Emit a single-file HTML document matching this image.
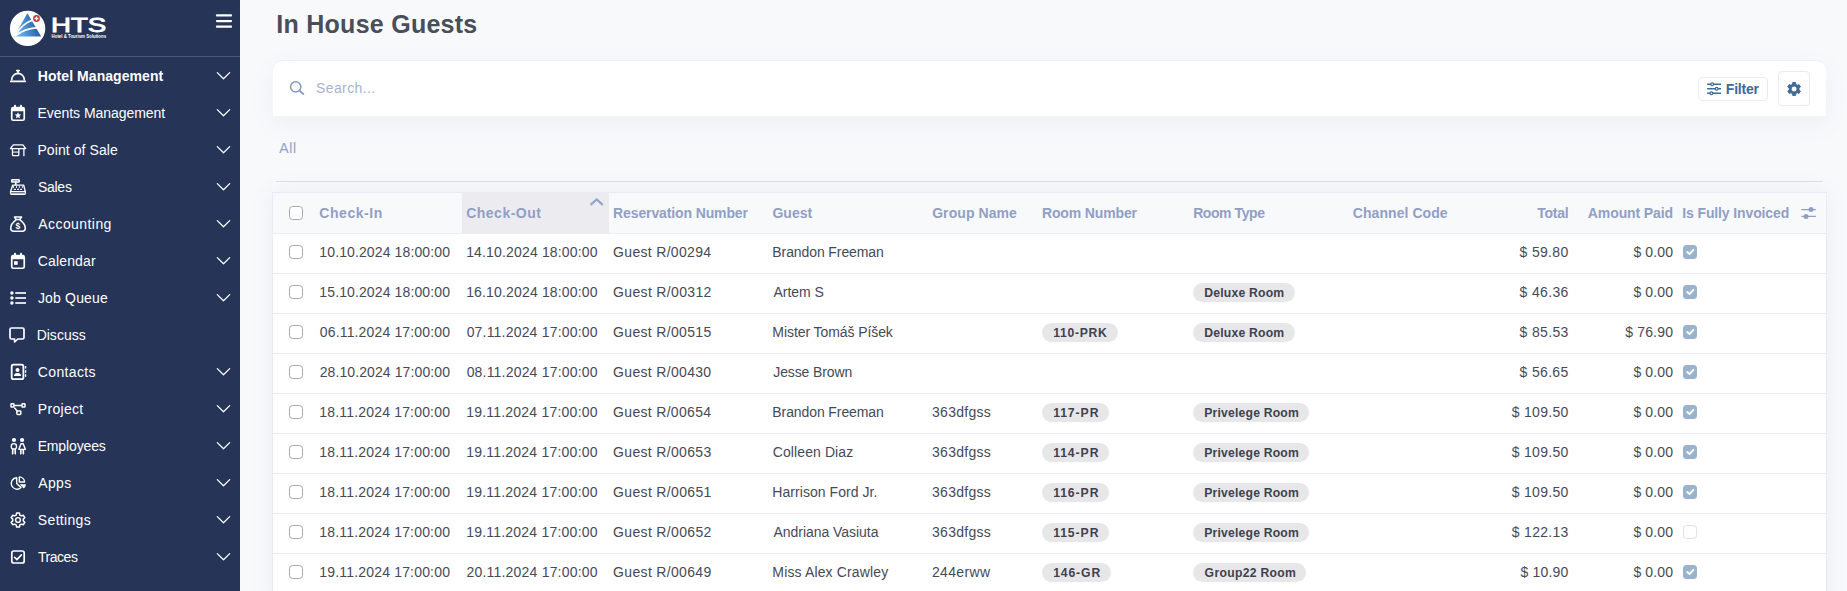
<!DOCTYPE html>
<html lang="en"><head><meta charset="utf-8"><title>In House Guests</title>
<style>
*{box-sizing:border-box;margin:0;padding:0}
html,body{width:1847px;height:591px;overflow:hidden}
body{background:#f8f9fb;font-family:"Liberation Sans", sans-serif;font-size:14px;color:#464a56;position:relative}
.a,.t,svg{position:absolute}
.t{white-space:pre}
#sb{left:0;top:0;width:240px;height:591px;background:#253457}
#sbdiv{left:0;top:56px;width:240px;height:1px;background:#46567c}
h1{font-weight:inherit;font-size:inherit}
#search{left:273px;top:60px;width:1553px;height:56px;background:#fff;border-radius:10px 10px 0 0;border-top:1px solid #eceefa;box-shadow:0 8px 24px rgba(110,120,165,.075)}
#filter{left:1698px;top:77px;width:70px;height:24px;border:1px solid #e9ecf7;border-radius:4px;background:#fff}
#cog{left:1778px;top:71px;width:32px;height:35px;border:1px solid #e9ecf7;border-radius:4px;background:#fff}
#hr{left:276px;top:181px;width:1547px;height:1px;background:#dddfe7}
#tbl{left:272px;top:192px;width:1555px;height:420px;background:#fff;border:1px solid #e9ecf5;box-shadow:0 0 22px rgba(90,100,140,.08)}
#thead{left:273px;top:193px;width:1553px;height:40px;background:#f8f9fb}
#sorted{left:462px;top:193px;width:147px;height:40px;background:#ececf0}
.ln{left:273px;width:1553px;height:1px;background:#e9ecf5}
.cb{left:289px;width:14px;height:14px;border:1.400px solid #a8a9ae;border-radius:3.500px;background:#fff}
.pill{height:19px;border-radius:9.5px;background:#e7e7ea}
.ck{left:1683px;width:14px;height:14px;border-radius:3.500px;background:#9ab4cd}
.ck.off{background:#fff;border:1px solid #dfe2ea}

</style></head><body>
<div class="a" id="sb"></div>
<svg style="left:0;top:0" width="120" height="56" viewBox="0 0 120 56">
<defs><linearGradient id="g1" x1="0" y1=".3" x2="1" y2="0"><stop offset="0" stop-color="#6cb2e8"/><stop offset=".5" stop-color="#3a7bc0"/><stop offset="1" stop-color="#1b3d77"/></linearGradient></defs>
<circle cx="27.600" cy="28.400" r="17.700" fill="#fff"/>
<path d="M27.400 13.200L14 36.600h27.200z" fill="url(#g1)"/>
<path d="M14.600 35.800C20 27 27 21.500 34.500 19.600" stroke="#fff" stroke-width="1.600" fill="none"/>
<path d="M15 36C22 30.500 30 27.800 38.500 27.600" stroke="#fff" stroke-width="1.600" fill="none"/>
<path d="M31 19l4-3 3 4-2 3z" fill="#fff"/>
<circle cx="36.500" cy="18.500" r="3.400" fill="#c8323a"/>
<path d="M36.500 16.600v3.800M34.600 18.500h3.800" stroke="#fff" stroke-width="1.300"/>
<text x="51" y="31.500" font-family='"Liberation Sans", sans-serif' font-size="21" fill="#fff" stroke="#fff" stroke-width=".9" textLength="55.200" lengthAdjust="spacingAndGlyphs">HTS</text>
<text x="51.600" y="37.600" font-family='"Liberation Sans", sans-serif' font-size="4.600" font-weight="700" fill="#fff" textLength="54.500" lengthAdjust="spacingAndGlyphs">Hotel &amp; Tourism Solutions</text>
</svg>
<svg style="left:214px;top:12px" width="20" height="18" viewBox="0 0 20 18"><path d="M3 3.400h14M3 9.100h14M3 14.700h14" stroke="#fff" stroke-width="2.300" stroke-linecap="round"/></svg>
<div class="a" id="sbdiv"></div>
<svg style="left:0;top:61px" width="36" height="30" viewBox="0 0 36 30"><path d="M10.700 20.300h14.600" stroke="#fff" fill="none" stroke-linecap="round" stroke-linejoin="round" stroke-width="1.700"/><path d="M11.700 18.700a6.300 6.300 0 0 1 12.600 0" stroke="#fff" fill="none" stroke-linecap="round" stroke-linejoin="round" stroke-width="1.700" stroke-linecap="butt"/><path d="M16.700 9.600h2.600" stroke="#fff" fill="none" stroke-linecap="round" stroke-linejoin="round" stroke-width="1.600"/><path d="M18 9.800v2.600" stroke="#fff" fill="none" stroke-linecap="round" stroke-linejoin="round" stroke-width="1.600" stroke-linecap="butt"/></svg>
<span class="t" id="m0" style="left:37.76px;top:66px;font-size:14px;line-height:20px;color:#fff;letter-spacing:0.069px;font-weight:700">Hotel Management</span>
<svg style="left:215px;top:70px" width="17" height="12" viewBox="0 0 17 12"><path d="M2.300 2.600l6.200 6.200 6.200-6.200" stroke="#fff" stroke-width="1.250" fill="none" stroke-linecap="round" stroke-linejoin="round"/></svg>
<svg style="left:0;top:98px" width="36" height="30" viewBox="0 0 36 30"><path d="M15 7.800v1.400M21 7.800v1.400" stroke="#fff" fill="none" stroke-linecap="round" stroke-linejoin="round" stroke-width="2" stroke-linecap="butt"/><path d="M13.300 8.800h9.400a2.400 2.400 0 0 1 2.400 2.400v9.500a2.400 2.400 0 0 1-2.400 2.400h-9.400a2.400 2.400 0 0 1-2.400-2.400v-9.500a2.400 2.400 0 0 1 2.400-2.400z M12.600 13.200v7.600a.6.600 0 0 0 .6.600h9.600a.6.600 0 0 0 .6-.6v-7.600z" fill="#fff" fill-rule="evenodd"/><path d="M18 14.200l.98 2.050 2.200.290-1.620 1.540.41 2.200L18 19.200l-1.970 1.080.41-2.200-1.620-1.540 2.200-.290z" fill="#fff"/></svg>
<span class="t" id="m1" style="left:37.55px;top:103px;font-size:14px;line-height:20px;color:#fff;letter-spacing:-0.047px">Events Management</span>
<svg style="left:215px;top:107px" width="17" height="12" viewBox="0 0 17 12"><path d="M2.300 2.600l6.200 6.200 6.200-6.200" stroke="#fff" stroke-width="1.250" fill="none" stroke-linecap="round" stroke-linejoin="round"/></svg>
<svg style="left:0;top:135px" width="36" height="30" viewBox="0 0 36 30"><path d="M13.300 9.900h9.600l2.800 3.700H10.400z" stroke="#fff" fill="none" stroke-linecap="round" stroke-linejoin="round" stroke-width="1.300"/><path d="M12.500 13.600v6.200a.9.900 0 0 0 .9.900h4.500a.9.900 0 0 0 .9-.9v-6.200M23.900 13.600v7.100" stroke="#fff" fill="none" stroke-linecap="round" stroke-linejoin="round" stroke-width="1.300"/><path d="M12.500 17.100h6.300" stroke="#fff" stroke-opacity=".7" stroke-width="1.500" fill="none"/></svg>
<span class="t" id="m2" style="left:37.45px;top:140px;font-size:14px;line-height:20px;color:#fff;letter-spacing:0.082px">Point of Sale</span>
<svg style="left:215px;top:144px" width="17" height="12" viewBox="0 0 17 12"><path d="M2.300 2.600l6.200 6.200 6.200-6.200" stroke="#fff" stroke-width="1.250" fill="none" stroke-linecap="round" stroke-linejoin="round"/></svg>
<svg style="left:0;top:172px" width="36" height="30" viewBox="0 0 36 30"><rect x="11.700" y="7.800" width="7.500" height="2.300" rx=".5" stroke="#fff" fill="none" stroke-linecap="round" stroke-linejoin="round" stroke-width="1.500"/><path d="M13.300 9h4.400" stroke="#fff" stroke-opacity=".5" stroke-width="1"/><path d="M15.800 10.800v1.700" stroke="#fff" fill="none" stroke-linecap="round" stroke-linejoin="round" stroke-width="1.700" stroke-linecap="butt"/><path d="M12.700 13.100h11l1.600 6.400v1.700a1 1 0 0 1-1 1H11.600a1 1 0 0 1-1-1v-1.700z" stroke="#fff" fill="none" stroke-linecap="round" stroke-linejoin="round" stroke-width="1.400"/><path d="M10.800 19.500h14.400" stroke="#fff" fill="none" stroke-linecap="round" stroke-linejoin="round" stroke-width="1.200"/><path d="M11.800 21h12.400" stroke="#fff" stroke-opacity=".5" stroke-width="1.400"/><path d="M13.500 14.200v1.700M16.500 14.200v1.700M19.400 14.200v1.700M22.400 14.200v1.700" stroke="#fff" stroke-width="1"/><path d="M13.900 17.400h2M17 17.400h2M20.100 17.400h2" stroke="#fff" stroke-width="1.100"/></svg>
<span class="t" id="m3" style="left:37.96px;top:177px;font-size:14px;line-height:20px;color:#fff;letter-spacing:-0.272px">Sales</span>
<svg style="left:215px;top:181px" width="17" height="12" viewBox="0 0 17 12"><path d="M2.300 2.600l6.200 6.200 6.200-6.200" stroke="#fff" stroke-width="1.250" fill="none" stroke-linecap="round" stroke-linejoin="round"/></svg>
<svg style="left:0;top:209px" width="36" height="30" viewBox="0 0 36 30"><path d="M14.400 8h7.200l-1.900 2.600h-3.400z" stroke="#fff" fill="none" stroke-linecap="round" stroke-linejoin="round" stroke-width="1.500"/><path d="M16.300 10.600c-3.200 2.400-5.600 6-5.600 8.600 0 1.800 1.200 3 3 3h8.600c1.800 0 3-1.200 3-3 0-2.600-2.400-6.200-5.600-8.600" stroke="#fff" fill="none" stroke-linecap="round" stroke-linejoin="round" stroke-width="1.500"/><text x="17.900" y="19.800" text-anchor="middle" font-family='"Liberation Sans", sans-serif' font-size="8.500" font-weight="700" fill="#fff">$</text></svg>
<span class="t" id="m4" style="left:38.27px;top:214px;font-size:14px;line-height:20px;color:#fff;letter-spacing:0.428px">Accounting</span>
<svg style="left:215px;top:218px" width="17" height="12" viewBox="0 0 17 12"><path d="M2.300 2.600l6.200 6.200 6.200-6.200" stroke="#fff" stroke-width="1.250" fill="none" stroke-linecap="round" stroke-linejoin="round"/></svg>
<svg style="left:0;top:246px" width="36" height="30" viewBox="0 0 36 30"><path d="M15 7.800v1.400M21 7.800v1.400" stroke="#fff" fill="none" stroke-linecap="round" stroke-linejoin="round" stroke-width="2" stroke-linecap="butt"/><path d="M13.300 8.800h9.400a2.400 2.400 0 0 1 2.400 2.400v9.500a2.400 2.400 0 0 1-2.400 2.400h-9.400a2.400 2.400 0 0 1-2.400-2.400v-9.500a2.400 2.400 0 0 1 2.400-2.400z M12.600 13.200v7.600a.6.600 0 0 0 .6.600h9.600a.6.600 0 0 0 .6-.6v-7.600z" fill="#fff" fill-rule="evenodd"/><rect x="14" y="15.200" width="3.700" height="3.600" fill="#fff"/></svg>
<span class="t" id="m5" style="left:37.79px;top:251px;font-size:14px;line-height:20px;color:#fff;letter-spacing:0.145px">Calendar</span>
<svg style="left:215px;top:255px" width="17" height="12" viewBox="0 0 17 12"><path d="M2.300 2.600l6.200 6.200 6.200-6.200" stroke="#fff" stroke-width="1.250" fill="none" stroke-linecap="round" stroke-linejoin="round"/></svg>
<svg style="left:0;top:283px" width="36" height="30" viewBox="0 0 36 30"><circle cx="11.900" cy="10" r="1.700" fill="#fff"/><circle cx="11.900" cy="15" r="1.700" fill="#fff"/><circle cx="11.900" cy="20" r="1.700" fill="#fff"/><path d="M15.300 10h10.700M15.300 15h10.700M15.300 20h10.700" stroke="#d9dde6" stroke-width="2" fill="none"/></svg>
<span class="t" id="m6" style="left:37.88px;top:288px;font-size:14px;line-height:20px;color:#fff;letter-spacing:0.18px">Job Queue</span>
<svg style="left:215px;top:292px" width="17" height="12" viewBox="0 0 17 12"><path d="M2.300 2.600l6.200 6.200 6.200-6.200" stroke="#fff" stroke-width="1.250" fill="none" stroke-linecap="round" stroke-linejoin="round"/></svg>
<svg style="left:0;top:320px" width="36" height="30" viewBox="0 0 36 30"><path d="M11.500 8h11a1.500 1.500 0 0 1 1.500 1.500v8a1.500 1.500 0 0 1-1.500 1.500h-4.700l-3.200 3v-3h-3.100a1.500 1.500 0 0 1-1.500-1.500v-8a1.500 1.500 0 0 1 1.500-1.500z" stroke="#fff" fill="none" stroke-linecap="round" stroke-linejoin="round" stroke-width="1.700"/></svg>
<span class="t" id="m7" style="left:36.65px;top:325px;font-size:14px;line-height:20px;color:#fff;letter-spacing:0.006px">Discuss</span>
<svg style="left:0;top:357px" width="36" height="30" viewBox="0 0 36 30"><rect x="11.700" y="7.700" width="11.700" height="14.500" rx="1.800" stroke="#fff" fill="none" stroke-linecap="round" stroke-linejoin="round" stroke-width="1.800"/><path d="M25.600 9v2.500M25.600 13.200v2.500M25.600 17.200v2.600" stroke="#fff" stroke-width="1.300" fill="none"/><circle cx="17.500" cy="13" r="2" fill="#fff"/><path d="M13.900 19a3.600 2.900 0 0 1 7.200 0z" fill="#fff"/></svg>
<span class="t" id="m8" style="left:37.79px;top:362px;font-size:14px;line-height:20px;color:#fff;letter-spacing:0.367px">Contacts</span>
<svg style="left:215px;top:366px" width="17" height="12" viewBox="0 0 17 12"><path d="M2.300 2.600l6.200 6.200 6.200-6.200" stroke="#fff" stroke-width="1.250" fill="none" stroke-linecap="round" stroke-linejoin="round"/></svg>
<svg style="left:0;top:394px" width="36" height="30" viewBox="0 0 36 30"><rect x="11" y="9.800" width="2.900" height="3.300" rx=".5" stroke="#fff" fill="none" stroke-linecap="round" stroke-linejoin="round" stroke-width="1.500"/><rect x="22" y="9.800" width="3" height="3.300" rx=".5" stroke="#fff" fill="none" stroke-linecap="round" stroke-linejoin="round" stroke-width="1.500"/><rect x="16.900" y="16.900" width="3.900" height="3.500" rx=".6" stroke="#fff" fill="none" stroke-linecap="round" stroke-linejoin="round" stroke-width="1.500"/><path d="M14.700 11.500h6.600M14.700 14l2.200 2.700" stroke="#fff" fill="none" stroke-linecap="round" stroke-linejoin="round" stroke-width="1.400" stroke-linecap="butt"/></svg>
<span class="t" id="m9" style="left:37.85px;top:399px;font-size:14px;line-height:20px;color:#fff;letter-spacing:0.295px">Project</span>
<svg style="left:215px;top:403px" width="17" height="12" viewBox="0 0 17 12"><path d="M2.300 2.600l6.200 6.200 6.200-6.200" stroke="#fff" stroke-width="1.250" fill="none" stroke-linecap="round" stroke-linejoin="round"/></svg>
<svg style="left:0;top:431px" width="36" height="30" viewBox="0 0 36 30"><circle cx="14" cy="9" r="2.100" fill="#fff"/><circle cx="22.100" cy="9" r="2.100" fill="#fff"/><path d="M11.300 15.200a2.600 2.600 0 0 1 5.200 0v.9a2.200 2.200 0 0 1-1.100 1.900h-3a2.200 2.200 0 0 1-1.100-1.900z" stroke="#fff" fill="none" stroke-linecap="round" stroke-linejoin="round" stroke-width="1.400"/><path d="M12.500 18.400h2.900v4.500h-2.900z" fill="#fff" fill-opacity=".45"/><path d="M12.500 18.400v4.500M15.400 18.400v4.500" stroke="#fff" fill="none" stroke-linecap="round" stroke-linejoin="round" stroke-width="1.300" stroke-linecap="butt"/><path d="M21 12.800h2.200l2.200 5.600h-6.600z" stroke="#fff" fill="none" stroke-linecap="round" stroke-linejoin="round" stroke-width="1.400"/><path d="M20.700 18.800h2.800v4.100h-2.800z" fill="#fff" fill-opacity=".45"/><path d="M20.700 18.800v4.100M23.500 18.800v4.100" stroke="#fff" fill="none" stroke-linecap="round" stroke-linejoin="round" stroke-width="1.300" stroke-linecap="butt"/></svg>
<span class="t" id="m10" style="left:37.65px;top:436px;font-size:14px;line-height:20px;color:#fff;letter-spacing:-0.139px">Employees</span>
<svg style="left:215px;top:440px" width="17" height="12" viewBox="0 0 17 12"><path d="M2.300 2.600l6.200 6.200 6.200-6.200" stroke="#fff" stroke-width="1.250" fill="none" stroke-linecap="round" stroke-linejoin="round"/></svg>
<svg style="left:0;top:468px" width="36" height="30" viewBox="0 0 36 30"><path d="M16.700 9.800a5.700 5.700 0 1 0 4.300 9.700l-4.300-4.100z" stroke="#fff" fill="none" stroke-linecap="round" stroke-linejoin="round" stroke-width="1.400"/><path d="M19.300 8.900a5.500 5.500 0 0 1 5.300 5.100h-5.300z" stroke="#fff" fill="none" stroke-linecap="round" stroke-linejoin="round" stroke-width="1.400"/><path d="M19.600 16.300h6.400a6.400 6.400 0 0 1-2.200 4.200z" fill="#fff"/></svg>
<span class="t" id="m11" style="left:38.27px;top:473px;font-size:14px;line-height:20px;color:#fff;letter-spacing:0.337px">Apps</span>
<svg style="left:215px;top:477px" width="17" height="12" viewBox="0 0 17 12"><path d="M2.300 2.600l6.200 6.200 6.200-6.200" stroke="#fff" stroke-width="1.250" fill="none" stroke-linecap="round" stroke-linejoin="round"/></svg>
<svg style="left:0;top:505px" width="36" height="30" viewBox="0 0 36 30"><path d="M16.13 10.04 L16.58 7.99 L19.42 7.99 L19.87 10.04 L21.36 10.90 L23.36 10.27 L24.78 12.73 L23.23 14.14 L23.23 15.86 L24.78 17.27 L23.36 19.73 L21.36 19.10 L19.87 19.96 L19.42 22.01 L16.58 22.01 L16.13 19.96 L14.64 19.10 L12.64 19.73 L11.22 17.27 L12.77 15.86 L12.77 14.14 L11.22 12.73 L12.64 10.27 L14.64 10.90z" stroke="#fff" fill="none" stroke-linecap="round" stroke-linejoin="round" stroke-width="1.500"/><circle cx="18" cy="15" r="2.400" stroke="#fff" fill="none" stroke-linecap="round" stroke-linejoin="round" stroke-width="1.400"/></svg>
<span class="t" id="m12" style="left:37.86px;top:510px;font-size:14px;line-height:20px;color:#fff;letter-spacing:0.321px">Settings</span>
<svg style="left:215px;top:514px" width="17" height="12" viewBox="0 0 17 12"><path d="M2.300 2.600l6.200 6.200 6.200-6.200" stroke="#fff" stroke-width="1.250" fill="none" stroke-linecap="round" stroke-linejoin="round"/></svg>
<svg style="left:0;top:542px" width="36" height="30" viewBox="0 0 36 30"><rect x="11.800" y="9" width="12.400" height="12" rx="2" stroke="#fff" fill="none" stroke-linecap="round" stroke-linejoin="round" stroke-width="1.700"/><path d="M14.600 15.300l2.300 2.300 4.500-4.700" stroke="#fff" fill="none" stroke-linecap="round" stroke-linejoin="round" stroke-width="1.600"/></svg>
<span class="t" id="m13" style="left:37.99px;top:547px;font-size:14px;line-height:20px;color:#fff;letter-spacing:-0.472px">Traces</span>
<svg style="left:215px;top:551px" width="17" height="12" viewBox="0 0 17 12"><path d="M2.300 2.600l6.200 6.200 6.200-6.200" stroke="#fff" stroke-width="1.250" fill="none" stroke-linecap="round" stroke-linejoin="round"/></svg>
<h1><span class="t" id="title" style="left:276.33px;top:8px;font-size:25px;line-height:32px;color:#494e59;letter-spacing:0.259px;font-weight:700">In House Guests</span></h1>
<div class="a" id="search"></div>
<svg style="left:286px;top:78px" width="20" height="20" viewBox="0 0 20 20"><circle cx="9.700" cy="8.800" r="5.150" stroke="#8497c4" stroke-width="1.500" fill="none"/><path d="M13.500 12.700l3.900 3.500" stroke="#8497c4" stroke-width="1.700" stroke-linecap="round"/></svg>
<span class="t" id="ph" style="left:315.96px;top:78px;font-size:14px;line-height:20px;color:#a9b3cf;letter-spacing:0.41px">Search...</span>
<div class="a" id="filter"></div>
<svg style="left:1706px;top:81px" width="16" height="16" viewBox="0 0 16 16"><path d="M1.200 3.300h13.800M1.200 7.700h13.800M1.200 12.200h13.800" stroke="#3e6a97" stroke-width="1.600"/><circle cx="6.200" cy="3.300" r="1.400" fill="#fff" stroke="#3e6a97" stroke-width="1.200"/><circle cx="10.700" cy="7.700" r="1.400" fill="#fff" stroke="#3e6a97" stroke-width="1.200"/><circle cx="5.400" cy="12.200" r="1.400" fill="#fff" stroke="#3e6a97" stroke-width="1.200"/></svg>
<span class="t" id="flt" style="left:1725.86px;top:79px;font-size:14px;line-height:20px;color:#3e6a97;letter-spacing:-0.217px;font-weight:700">Filter</span>
<div class="a" id="cog"></div>
<svg style="left:1785px;top:80px" width="18" height="18" viewBox="0 0 18 18"><path d="M7.45 4.33 L7.71 2.50 L10.49 2.50 L10.75 4.33 L12.32 5.24 L14.04 4.55 L15.43 6.95 L13.97 8.10 L13.97 9.90 L15.43 11.05 L14.04 13.45 L12.32 12.76 L10.75 13.67 L10.49 15.50 L7.71 15.50 L7.45 13.67 L5.88 12.76 L4.16 13.45 L2.77 11.05 L4.23 9.90 L4.23 8.10 L2.77 6.95 L4.16 4.55 L5.88 5.24z M9.1 6.05a2.95 2.95 0 1 0 0 5.9a2.95 2.95 0 1 0 0 -5.9z" fill="#3e6a97" fill-rule="evenodd" stroke="#3e6a97" stroke-width=".9" stroke-linejoin="round"/></svg>
<span class="t" id="all" style="left:279.17px;top:138px;font-size:14px;line-height:20px;color:#8f9fc9;letter-spacing:0.751px">All</span>
<div class="a" id="hr"></div>
<div class="a" id="tbl"></div>
<div class="a" id="thead"></div>
<div class="a" id="sorted"></div>
<div class="a ln" style="top:233px"></div>
<span class="a cb" style="top:206px"></span>
<span class="t" id="h0" style="left:319.23px;top:203px;font-size:14px;line-height:20px;color:#919fc5;letter-spacing:0.574px;font-weight:700">Check-In</span>
<span class="t" id="h1" style="left:466.23px;top:203px;font-size:14px;line-height:20px;color:#919fc5;letter-spacing:0.481px;font-weight:700">Check-Out</span>
<span class="t" id="h2" style="left:613.06px;top:203px;font-size:14px;line-height:20px;color:#919fc5;letter-spacing:-0.117px;font-weight:700">Reservation Number</span>
<span class="t" id="h3" style="left:772.43px;top:203px;font-size:14px;line-height:20px;color:#919fc5;letter-spacing:0.014px;font-weight:700">Guest</span>
<span class="t" id="h4" style="left:932.13px;top:203px;font-size:14px;line-height:20px;color:#919fc5;letter-spacing:0.082px;font-weight:700">Group Name</span>
<span class="t" id="h5" style="left:1041.96px;top:203px;font-size:14px;line-height:20px;color:#919fc5;letter-spacing:-0.14px;font-weight:700">Room Number</span>
<span class="t" id="h6" style="left:1193.16px;top:203px;font-size:14px;line-height:20px;color:#919fc5;letter-spacing:-0.424px;font-weight:700">Room Type</span>
<span class="t" id="h7" style="left:1352.73px;top:203px;font-size:14px;line-height:20px;color:#919fc5;letter-spacing:0.075px;font-weight:700">Channel Code</span>
<span class="t" id="h8" style="left:1537.14px;top:203px;font-size:14px;line-height:20px;color:#919fc5;letter-spacing:-0.214px;font-weight:700">Total</span>
<span class="t" id="h9" style="left:1587.85px;top:203px;font-size:14px;line-height:20px;color:#919fc5;letter-spacing:-0.107px;font-weight:700">Amount Paid</span>
<span class="t" id="h10" style="left:1682.26px;top:203px;font-size:14px;line-height:20px;color:#919fc5;letter-spacing:-0.123px;font-weight:700">Is Fully Invoiced</span>
<svg style="left:588px;top:195px" width="18" height="14" viewBox="0 0 18 14"><path d="M2.600 9.900L8.700 4.400L14.800 9.900" stroke="#94a4ca" stroke-width="2.200" fill="none"/></svg>
<svg style="left:1800px;top:204px" width="18" height="18" viewBox="0 0 18 18"><path d="M1.300 5.500h14.600M1.300 12.400h14.600" stroke="#919fc5" stroke-width="1.250"/><circle cx="11" cy="5.500" r="2.500" fill="#919fc5"/><circle cx="6" cy="12.400" r="2.500" fill="#919fc5"/></svg>
<span class="a cb" style="top:245px"></span>
<span class="t" id="r0c0" style="left:319.33px;top:242px;font-size:14px;line-height:20px;color:#464a56;letter-spacing:0.119px">10.10.2024 18:00:00</span>
<span class="t" id="r0c1" style="left:466.13px;top:242px;font-size:14px;line-height:20px;color:#464a56;letter-spacing:0.164px">14.10.2024 18:00:00</span>
<span class="t" id="r0c2" style="left:613.1px;top:242px;font-size:14px;line-height:20px;color:#464a56;letter-spacing:0.312px">Guest R/00294</span>
<span class="t" id="r0c3" style="left:772.35px;top:242px;font-size:14px;line-height:20px;color:#464a56;letter-spacing:-0.099px">Brandon Freeman</span>
<span class="t" id="r0c7" style="left:1519.55px;top:242px;font-size:14px;line-height:20px;color:#464a56;letter-spacing:0.33px">$ 59.80</span>
<span class="t" id="r0c8" style="left:1633.45px;top:242px;font-size:14px;line-height:20px;color:#464a56;letter-spacing:0.112px">$ 0.00</span>
<span class="a ck" style="top:245px"></span><svg style="left:1683px;top:245px" width="14" height="14" viewBox="0 0 14 14"><path d="M4.300 7l2.100 2.100 4-4.300" stroke="#fff" stroke-width="1.900" fill="none" stroke-linecap="round" stroke-linejoin="round"/></svg>
<div class="a ln" style="top:273px"></div>
<span class="a cb" style="top:285px"></span>
<span class="t" id="r1c0" style="left:319.33px;top:282px;font-size:14px;line-height:20px;color:#464a56;letter-spacing:0.119px">15.10.2024 18:00:00</span>
<span class="t" id="r1c1" style="left:466.13px;top:282px;font-size:14px;line-height:20px;color:#464a56;letter-spacing:0.164px">16.10.2024 18:00:00</span>
<span class="t" id="r1c2" style="left:613.1px;top:282px;font-size:14px;line-height:20px;color:#464a56;letter-spacing:0.336px">Guest R/00312</span>
<span class="t" id="r1c3" style="left:773.47px;top:282px;font-size:14px;line-height:20px;color:#464a56;letter-spacing:-0.035px">Artem S</span>
<span class="a pill" style="left:1193px;top:283px;width:102px"></span>
<span class="t" id="r1c6" style="left:1204.28px;top:284px;font-size:12.2px;line-height:19px;color:#3f424c;letter-spacing:0.198px;font-weight:700">Deluxe Room</span>
<span class="t" id="r1c7" style="left:1519.55px;top:282px;font-size:14px;line-height:20px;color:#464a56;letter-spacing:0.341px">$ 46.36</span>
<span class="t" id="r1c8" style="left:1633.45px;top:282px;font-size:14px;line-height:20px;color:#464a56;letter-spacing:0.112px">$ 0.00</span>
<span class="a ck" style="top:285px"></span><svg style="left:1683px;top:285px" width="14" height="14" viewBox="0 0 14 14"><path d="M4.300 7l2.100 2.100 4-4.300" stroke="#fff" stroke-width="1.900" fill="none" stroke-linecap="round" stroke-linejoin="round"/></svg>
<div class="a ln" style="top:313px"></div>
<span class="a cb" style="top:325px"></span>
<span class="t" id="r2c0" style="left:319.85px;top:322px;font-size:14px;line-height:20px;color:#464a56;letter-spacing:0.148px">06.11.2024 17:00:00</span>
<span class="t" id="r2c1" style="left:466.65px;top:322px;font-size:14px;line-height:20px;color:#464a56;letter-spacing:0.193px">07.11.2024 17:00:00</span>
<span class="t" id="r2c2" style="left:613.1px;top:322px;font-size:14px;line-height:20px;color:#464a56;letter-spacing:0.327px">Guest R/00515</span>
<span class="t" id="r2c3" style="left:772.35px;top:322px;font-size:14px;line-height:20px;color:#464a56;letter-spacing:-0.08px">Mister Tomáš Píšek</span>
<span class="a pill" style="left:1042px;top:323px;width:76px"></span>
<span class="t" id="r2c5" style="left:1053.13px;top:324px;font-size:12.2px;line-height:19px;color:#3f424c;letter-spacing:0.705px;font-weight:700">110-PRK</span>
<span class="a pill" style="left:1193px;top:323px;width:102px"></span>
<span class="t" id="r2c6" style="left:1204.28px;top:324px;font-size:12.2px;line-height:19px;color:#3f424c;letter-spacing:0.198px;font-weight:700">Deluxe Room</span>
<span class="t" id="r2c7" style="left:1519.55px;top:322px;font-size:14px;line-height:20px;color:#464a56;letter-spacing:0.341px">$ 85.53</span>
<span class="t" id="r2c8" style="left:1625.15px;top:322px;font-size:14px;line-height:20px;color:#464a56;letter-spacing:0.18px">$ 76.90</span>
<span class="a ck" style="top:325px"></span><svg style="left:1683px;top:325px" width="14" height="14" viewBox="0 0 14 14"><path d="M4.300 7l2.100 2.100 4-4.300" stroke="#fff" stroke-width="1.900" fill="none" stroke-linecap="round" stroke-linejoin="round"/></svg>
<div class="a ln" style="top:353px"></div>
<span class="a cb" style="top:365px"></span>
<span class="t" id="r3c0" style="left:319.7px;top:362px;font-size:14px;line-height:20px;color:#464a56;letter-spacing:0.099px">28.10.2024 17:00:00</span>
<span class="t" id="r3c1" style="left:466.65px;top:362px;font-size:14px;line-height:20px;color:#464a56;letter-spacing:0.193px">08.11.2024 17:00:00</span>
<span class="t" id="r3c2" style="left:613.1px;top:362px;font-size:14px;line-height:20px;color:#464a56;letter-spacing:0.323px">Guest R/00430</span>
<span class="t" id="r3c3" style="left:773.28px;top:362px;font-size:14px;line-height:20px;color:#464a56;letter-spacing:-0.123px">Jesse Brown</span>
<span class="t" id="r3c7" style="left:1519.55px;top:362px;font-size:14px;line-height:20px;color:#464a56;letter-spacing:0.337px">$ 56.65</span>
<span class="t" id="r3c8" style="left:1633.45px;top:362px;font-size:14px;line-height:20px;color:#464a56;letter-spacing:0.112px">$ 0.00</span>
<span class="a ck" style="top:365px"></span><svg style="left:1683px;top:365px" width="14" height="14" viewBox="0 0 14 14"><path d="M4.300 7l2.100 2.100 4-4.300" stroke="#fff" stroke-width="1.900" fill="none" stroke-linecap="round" stroke-linejoin="round"/></svg>
<div class="a ln" style="top:393px"></div>
<span class="a cb" style="top:405px"></span>
<span class="t" id="r4c0" style="left:319.33px;top:402px;font-size:14px;line-height:20px;color:#464a56;letter-spacing:0.177px">18.11.2024 17:00:00</span>
<span class="t" id="r4c1" style="left:466.13px;top:402px;font-size:14px;line-height:20px;color:#464a56;letter-spacing:0.222px">19.11.2024 17:00:00</span>
<span class="t" id="r4c2" style="left:613.1px;top:402px;font-size:14px;line-height:20px;color:#464a56;letter-spacing:0.312px">Guest R/00654</span>
<span class="t" id="r4c3" style="left:772.35px;top:402px;font-size:14px;line-height:20px;color:#464a56;letter-spacing:-0.099px">Brandon Freeman</span>
<span class="t" id="r4c4" style="left:932.07px;top:402px;font-size:14px;line-height:20px;color:#464a56;letter-spacing:0.259px">363dfgss</span>
<span class="a pill" style="left:1042px;top:403px;width:67px"></span>
<span class="t" id="r4c5" style="left:1053.13px;top:404px;font-size:12.2px;line-height:19px;color:#3f424c;letter-spacing:0.932px;font-weight:700">117-PR</span>
<span class="a pill" style="left:1193px;top:403px;width:116px"></span>
<span class="t" id="r4c6" style="left:1204.28px;top:404px;font-size:12.2px;line-height:19px;color:#3f424c;letter-spacing:0.181px;font-weight:700">Privelege Room</span>
<span class="t" id="r4c7" style="left:1511.85px;top:402px;font-size:14px;line-height:20px;color:#464a56;letter-spacing:0.271px">$ 109.50</span>
<span class="t" id="r4c8" style="left:1633.45px;top:402px;font-size:14px;line-height:20px;color:#464a56;letter-spacing:0.112px">$ 0.00</span>
<span class="a ck" style="top:405px"></span><svg style="left:1683px;top:405px" width="14" height="14" viewBox="0 0 14 14"><path d="M4.300 7l2.100 2.100 4-4.300" stroke="#fff" stroke-width="1.900" fill="none" stroke-linecap="round" stroke-linejoin="round"/></svg>
<div class="a ln" style="top:433px"></div>
<span class="a cb" style="top:445px"></span>
<span class="t" id="r5c0" style="left:319.33px;top:442px;font-size:14px;line-height:20px;color:#464a56;letter-spacing:0.177px">18.11.2024 17:00:00</span>
<span class="t" id="r5c1" style="left:466.13px;top:442px;font-size:14px;line-height:20px;color:#464a56;letter-spacing:0.222px">19.11.2024 17:00:00</span>
<span class="t" id="r5c2" style="left:613.1px;top:442px;font-size:14px;line-height:20px;color:#464a56;letter-spacing:0.329px">Guest R/00653</span>
<span class="t" id="r5c3" style="left:772.79px;top:442px;font-size:14px;line-height:20px;color:#464a56;letter-spacing:0.094px">Colleen Diaz</span>
<span class="t" id="r5c4" style="left:932.07px;top:442px;font-size:14px;line-height:20px;color:#464a56;letter-spacing:0.259px">363dfgss</span>
<span class="a pill" style="left:1042px;top:443px;width:67px"></span>
<span class="t" id="r5c5" style="left:1053.13px;top:444px;font-size:12.2px;line-height:19px;color:#3f424c;letter-spacing:0.932px;font-weight:700">114-PR</span>
<span class="a pill" style="left:1193px;top:443px;width:116px"></span>
<span class="t" id="r5c6" style="left:1204.28px;top:444px;font-size:12.2px;line-height:19px;color:#3f424c;letter-spacing:0.181px;font-weight:700">Privelege Room</span>
<span class="t" id="r5c7" style="left:1511.85px;top:442px;font-size:14px;line-height:20px;color:#464a56;letter-spacing:0.271px">$ 109.50</span>
<span class="t" id="r5c8" style="left:1633.45px;top:442px;font-size:14px;line-height:20px;color:#464a56;letter-spacing:0.112px">$ 0.00</span>
<span class="a ck" style="top:445px"></span><svg style="left:1683px;top:445px" width="14" height="14" viewBox="0 0 14 14"><path d="M4.300 7l2.100 2.100 4-4.300" stroke="#fff" stroke-width="1.900" fill="none" stroke-linecap="round" stroke-linejoin="round"/></svg>
<div class="a ln" style="top:473px"></div>
<span class="a cb" style="top:485px"></span>
<span class="t" id="r6c0" style="left:319.33px;top:482px;font-size:14px;line-height:20px;color:#464a56;letter-spacing:0.177px">18.11.2024 17:00:00</span>
<span class="t" id="r6c1" style="left:466.13px;top:482px;font-size:14px;line-height:20px;color:#464a56;letter-spacing:0.222px">19.11.2024 17:00:00</span>
<span class="t" id="r6c2" style="left:613.1px;top:482px;font-size:14px;line-height:20px;color:#464a56;letter-spacing:0.335px">Guest R/00651</span>
<span class="t" id="r6c3" style="left:772.35px;top:482px;font-size:14px;line-height:20px;color:#464a56;letter-spacing:0.049px">Harrison Ford Jr.</span>
<span class="t" id="r6c4" style="left:932.07px;top:482px;font-size:14px;line-height:20px;color:#464a56;letter-spacing:0.259px">363dfgss</span>
<span class="a pill" style="left:1042px;top:483px;width:67px"></span>
<span class="t" id="r6c5" style="left:1053.13px;top:484px;font-size:12.2px;line-height:19px;color:#3f424c;letter-spacing:0.932px;font-weight:700">116-PR</span>
<span class="a pill" style="left:1193px;top:483px;width:116px"></span>
<span class="t" id="r6c6" style="left:1204.28px;top:484px;font-size:12.2px;line-height:19px;color:#3f424c;letter-spacing:0.181px;font-weight:700">Privelege Room</span>
<span class="t" id="r6c7" style="left:1511.85px;top:482px;font-size:14px;line-height:20px;color:#464a56;letter-spacing:0.271px">$ 109.50</span>
<span class="t" id="r6c8" style="left:1633.45px;top:482px;font-size:14px;line-height:20px;color:#464a56;letter-spacing:0.112px">$ 0.00</span>
<span class="a ck" style="top:485px"></span><svg style="left:1683px;top:485px" width="14" height="14" viewBox="0 0 14 14"><path d="M4.300 7l2.100 2.100 4-4.300" stroke="#fff" stroke-width="1.900" fill="none" stroke-linecap="round" stroke-linejoin="round"/></svg>
<div class="a ln" style="top:513px"></div>
<span class="a cb" style="top:525px"></span>
<span class="t" id="r7c0" style="left:319.33px;top:522px;font-size:14px;line-height:20px;color:#464a56;letter-spacing:0.177px">18.11.2024 17:00:00</span>
<span class="t" id="r7c1" style="left:466.13px;top:522px;font-size:14px;line-height:20px;color:#464a56;letter-spacing:0.222px">19.11.2024 17:00:00</span>
<span class="t" id="r7c2" style="left:613.1px;top:522px;font-size:14px;line-height:20px;color:#464a56;letter-spacing:0.336px">Guest R/00652</span>
<span class="t" id="r7c3" style="left:773.47px;top:522px;font-size:14px;line-height:20px;color:#464a56;letter-spacing:-0.038px">Andriana Vasiuta</span>
<span class="t" id="r7c4" style="left:932.07px;top:522px;font-size:14px;line-height:20px;color:#464a56;letter-spacing:0.259px">363dfgss</span>
<span class="a pill" style="left:1042px;top:523px;width:67px"></span>
<span class="t" id="r7c5" style="left:1053.13px;top:524px;font-size:12.2px;line-height:19px;color:#3f424c;letter-spacing:0.932px;font-weight:700">115-PR</span>
<span class="a pill" style="left:1193px;top:523px;width:116px"></span>
<span class="t" id="r7c6" style="left:1204.28px;top:524px;font-size:12.2px;line-height:19px;color:#3f424c;letter-spacing:0.181px;font-weight:700">Privelege Room</span>
<span class="t" id="r7c7" style="left:1511.85px;top:522px;font-size:14px;line-height:20px;color:#464a56;letter-spacing:0.281px">$ 122.13</span>
<span class="t" id="r7c8" style="left:1633.45px;top:522px;font-size:14px;line-height:20px;color:#464a56;letter-spacing:0.112px">$ 0.00</span>
<span class="a ck off" style="top:525px"></span>
<div class="a ln" style="top:553px"></div>
<span class="a cb" style="top:565px"></span>
<span class="t" id="r8c0" style="left:319.33px;top:562px;font-size:14px;line-height:20px;color:#464a56;letter-spacing:0.177px">19.11.2024 17:00:00</span>
<span class="t" id="r8c1" style="left:466.5px;top:562px;font-size:14px;line-height:20px;color:#464a56;letter-spacing:0.202px">20.11.2024 17:00:00</span>
<span class="t" id="r8c2" style="left:613.1px;top:562px;font-size:14px;line-height:20px;color:#464a56;letter-spacing:0.333px">Guest R/00649</span>
<span class="t" id="r8c3" style="left:772.35px;top:562px;font-size:14px;line-height:20px;color:#464a56;letter-spacing:0.143px">Miss Alex Crawley</span>
<span class="t" id="r8c4" style="left:931.9px;top:562px;font-size:14px;line-height:20px;color:#464a56;letter-spacing:0.373px">244erww</span>
<span class="a pill" style="left:1042px;top:563px;width:69px"></span>
<span class="t" id="r8c5" style="left:1053.13px;top:564px;font-size:12.2px;line-height:19px;color:#3f424c;letter-spacing:0.886px;font-weight:700">146-GR</span>
<span class="a pill" style="left:1193px;top:563px;width:113px"></span>
<span class="t" id="r8c6" style="left:1204.6px;top:564px;font-size:12.2px;line-height:19px;color:#3f424c;letter-spacing:0.302px;font-weight:700">Group22 Room</span>
<span class="t" id="r8c7" style="left:1520.55px;top:562px;font-size:14px;line-height:20px;color:#464a56;letter-spacing:0.163px">$ 10.90</span>
<span class="t" id="r8c8" style="left:1633.45px;top:562px;font-size:14px;line-height:20px;color:#464a56;letter-spacing:0.112px">$ 0.00</span>
<span class="a ck" style="top:565px"></span><svg style="left:1683px;top:565px" width="14" height="14" viewBox="0 0 14 14"><path d="M4.300 7l2.100 2.100 4-4.300" stroke="#fff" stroke-width="1.900" fill="none" stroke-linecap="round" stroke-linejoin="round"/></svg>
</body></html>
